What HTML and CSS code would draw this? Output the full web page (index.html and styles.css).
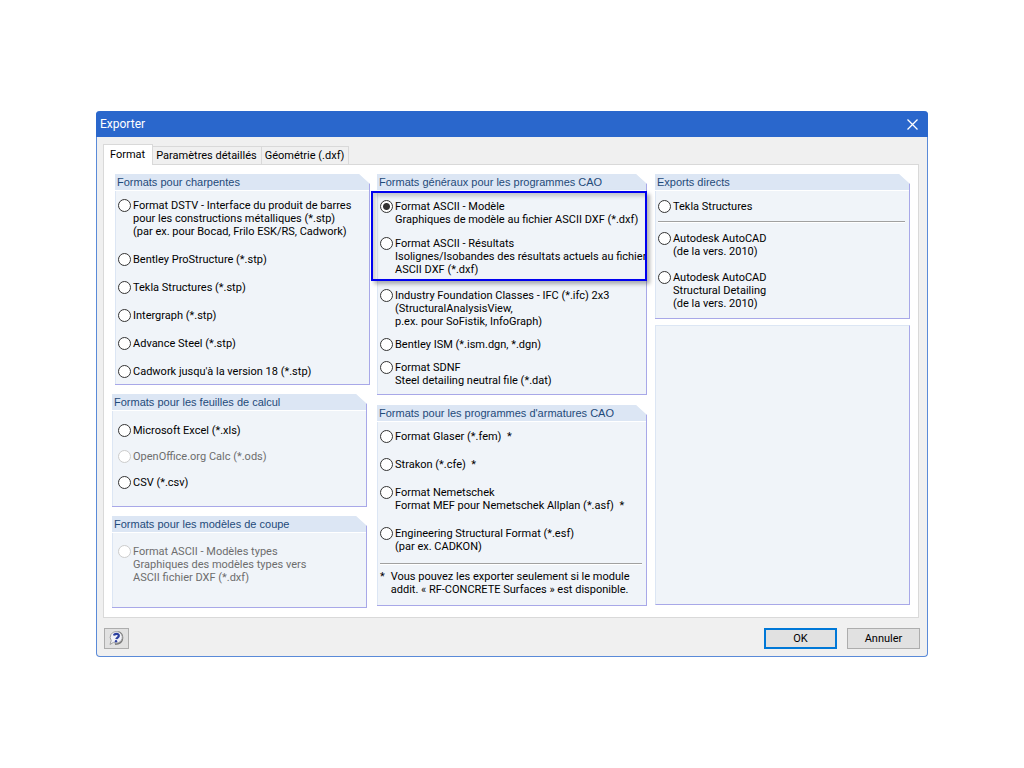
FILE: index.html
```html
<!DOCTYPE html>
<html lang="fr">
<head>
    <meta charset="UTF-8">
    <title>Exporter</title>
    <meta name="viewport" content="width=device-width, initial-scale=1.0">
    <link rel="stylesheet" href="styles.css">
</head>
<body>
    <main class="dialog">
        <header class="titlebar">
            <h1>Exporter</h1>
            <button type="button" class="close" aria-label="Fermer">
                <svg width="11" height="11" viewBox="0 0 11 11"><path d="M.5 .5l10 10M10.5 .5l-10 10" stroke="#fff" stroke-width="1.3"/></svg>
            </button>
        </header>
        <div class="tabs" role="tablist">
            <button type="button" role="tab" class="tab active" aria-selected="true">Format</button>
            <button type="button" role="tab" class="tab">Paramètres détaillés</button>
            <button type="button" role="tab" class="tab">Géométrie (.dxf)</button>
        </div>
        <form class="panel" id="export">
            <div class="column first">
                <section class="group steel">
                    <h2>Formats pour charpentes</h2>
                    <div class="options">
                        <label class="option"><input type="radio" name="format"><span>Format DSTV - Interface du produit de barres<br>pour les constructions métalliques (*.stp)<br>(par ex. pour Bocad, Frilo ESK/RS, Cadwork)</span></label>
                        <label class="option"><input type="radio" name="format"><span>Bentley ProStructure (*.stp)</span></label>
                        <label class="option"><input type="radio" name="format"><span>Tekla Structures (*.stp)</span></label>
                        <label class="option"><input type="radio" name="format"><span>Intergraph (*.stp)</span></label>
                        <label class="option"><input type="radio" name="format"><span>Advance Steel (*.stp)</span></label>
                        <label class="option"><input type="radio" name="format"><span>Cadwork jusqu'à la version 18 (*.stp)</span></label>
                    </div>
                </section>
                <section class="group sheets">
                    <h2>Formats pour les feuilles de calcul</h2>
                    <div class="options">
                        <label class="option"><input type="radio" name="format"><span>Microsoft Excel (*.xls)</span></label>
                        <label class="option disabled"><input type="radio" name="format" disabled><span>OpenOffice.org Calc (*.ods)</span></label>
                        <label class="option"><input type="radio" name="format"><span>CSV (*.csv)</span></label>
                    </div>
                </section>
                <section class="group sections">
                    <h2>Formats pour les modèles de coupe</h2>
                    <div class="options">
                        <label class="option disabled"><input type="radio" name="format" disabled><span>Format ASCII - Modèles types<br>Graphiques des modèles types vers<br>ASCII fichier DXF (*.dxf)</span></label>
                    </div>
                </section>
            </div>
            <div class="column second">
                <section class="group cad">
                    <h2>Formats généraux pour les programmes CAO</h2>
                    <div class="options">
                        <div class="highlight">
                            <label class="option"><input type="radio" name="format" checked><span>Format ASCII - Modèle<br>Graphiques de modèle au fichier ASCII DXF (*.dxf)</span></label>
                            <label class="option"><input type="radio" name="format"><span>Format ASCII - Résultats<br>Isolignes/Isobandes des résultats actuels au fichier<br>ASCII DXF (*.dxf)</span></label>
                        </div>
                        <label class="option"><input type="radio" name="format"><span>Industry Foundation Classes - IFC (*.ifc) 2x3<br>(StructuralAnalysisView,<br>p.ex. pour SoFistik, InfoGraph)</span></label>
                        <label class="option"><input type="radio" name="format"><span>Bentley ISM (*.ism.dgn, *.dgn)</span></label>
                        <label class="option"><input type="radio" name="format"><span>Format SDNF<br>Steel detailing neutral file (*.dat)</span></label>
                    </div>
                </section>
                <section class="group rebar">
                    <h2>Formats pour les programmes d'armatures CAO</h2>
                    <div class="options">
                        <label class="option"><input type="radio" name="format"><span>Format Glaser (*.fem)&nbsp; *</span></label>
                        <label class="option"><input type="radio" name="format"><span>Strakon (*.cfe)&nbsp; *</span></label>
                        <label class="option"><input type="radio" name="format"><span>Format Nemetschek<br>Format MEF pour Nemetschek Allplan (*.asf)&nbsp; *</span></label>
                        <label class="option"><input type="radio" name="format"><span>Engineering Structural Format (*.esf)<br>(par ex. CADKON)</span></label>
                    </div>
                    <hr>
                    <p class="note"><span>*</span><span>Vous pouvez les exporter seulement si le module<br>addit. « RF-CONCRETE Surfaces » est disponible.</span></p>
                </section>
            </div>
            <div class="column third">
                <section class="group direct">
                    <h2>Exports directs</h2>
                    <div class="options">
                        <label class="option"><input type="radio" name="format"><span>Tekla Structures</span></label>
                    </div>
                    <hr>
                    <div class="options">
                        <label class="option"><input type="radio" name="format"><span>Autodesk AutoCAD<br>(de la vers. 2010)</span></label>
                        <label class="option"><input type="radio" name="format"><span>Autodesk AutoCAD<br>Structural Detailing<br>(de la vers. 2010)</span></label>
                    </div>
                </section>
                <div class="blank"></div>
            </div>
        </form>
        <footer class="actions">
            <button type="button" class="help" aria-label="Aide">
                <svg width="17" height="17" viewBox="0 0 17 17">
                    <path d="M10 2a6 6 0 0 1 0 11.500l-3 .5" fill="none" stroke="#777" stroke-width="2"/>
                    <path d="M8.500 1.500a6 5.800 0 1 1-3 10.900L2 14.500l1.200-4A6 5.800 0 0 1 8.500 1.500z" fill="#f1f2f8" stroke="#a0a0a0"/>
                    <path d="M6 5.500C6.300 3.300 11 3.200 10.800 5.800c-.1 1.600-2.300 1.800-2.500 3.400" fill="none" stroke="#2b3f9e" stroke-width="2.200"/>
                    <circle cx="8" cy="11.200" r="1.200" fill="#2b3f9e"/>
                </svg>
            </button>
            <button type="submit" form="export" class="btn primary">OK</button>
            <button type="button" class="btn">Annuler</button>
        </footer>
    </main>
</body>
</html>
```
FILE: styles.css
```css
*{ margin: 0; padding: 0; box-sizing: border-box}
body{
    min-height: 100vh;
    padding: 0 96px;
    display: flex;
    align-items: center;
    background: #fff;
    color: #000;
    font: 11px/13px Roboto, "Liberation Sans", sans-serif;
}
button{
    font: inherit;
    color: inherit;
}
.dialog{
    flex: 1;
    border: 1px solid #5a8ad8;
    border-top: 0;
    border-radius: 4px;
    background: #f0f0f0;
}
.titlebar{
    display: flex;
    align-items: center;
    justify-content: space-between;
    height: 26px;
    margin: 0 -1px;
    padding: 0 10px 0 4px;
    border-radius: 4px 4px 0 0;
    background: #2a67cc;
    color: #fff;
}
.titlebar h1{
    font: 12px/16px Roboto, sans-serif;
}
.close{
    display: flex;
    border: 0;
    background: none;
}
.tabs{
    display: flex;
    align-items: flex-end;
    margin: 7px 7px 0 6px;
}
.tab{
    height: 18px;
    border: 1px solid #d9d9d9;
    border-width: 1px 1px 0 0;
    padding: 0 4px 0 3px;
    background: #f0f0f0;
    white-space: nowrap;
}
.tab.active{
    height: 21px;
    margin-bottom: -1px;
    padding: 0 7px 2px 6px;
    border-left-width: 1px;
    background: #fff;
    position: relative;
}
.panel{
    display: grid;
    grid-template-columns: minmax(0, 258fr) minmax(0, 270fr) minmax(0, 256fr);
    column-gap: 7px;
    margin: 0 8px 0 6px;
    padding: 9px 8px;
    border: 1px solid #d9d9d9;
    background: #fff;
}
.column{
    display: flex;
    flex-direction: column;
}
.first{ gap: 9px}
.second{
    gap: 10px;
    padding-bottom: 2px;
}
.third{
    gap: 6px;
    padding: 0 0 3px 1px;
}

/* the polygon cuts the top right corner only */
.group{
    border: 1px solid #a8a8e8;
    border-width: 0 1px 1px 0;
    background: #f0f4f9;
    box-shadow: inset 1px 0 #dce6f4;
    clip-path: polygon(-20px 0, calc(100% - 11px) 0, 100% 10px, calc(100% + 20px) 10px, calc(100% + 20px) 100%, -20px 100%);
}
.group h2{
    height: 17px;
    padding-left: 2px;
    border-bottom: 1px solid #fff;
    background: #dce6f4;
    color: #1f4a7a;
    font: 11px/16px "Liberation Sans", Arial, sans-serif;
}
.options{
    display: flex;
    flex-direction: column;
    gap: 15px;
    padding: 9px 3px 8px;
}
.option{
    display: flex;
    gap: 2px;
    white-space: nowrap;
}
.option input{
    appearance: none;
    flex: none;
    width: 13px;
    height: 13px;
    border: 1px solid #333;
    border-radius: 50%;
    background: #fff;
}
.option input:checked{
    background: radial-gradient(circle, #333 3px, #fff 4px);
}
.option.disabled{ color: #6d6d6d}
.option.disabled input{ border-color: #ccc}

.steel{ margin-left: 3px}
.sheets,.sections{ margin-right: 3px}
.steel .options{ padding: 8px 3px 6px}
.sheets .options{
    gap: 13px;
    padding: 13px 6px 17px;
}
.sections{ flex: 1}
.sections .options{ padding: 12px 6px 23px}

.cad .options{
    gap: 10px;
    padding-bottom: 7px;
}
.highlight{
    display: flex;
    flex-direction: column;
    gap: 11px;
    margin-bottom: 3px;
    position: relative;
}
.highlight::after{
    content: "";
    position: absolute;
    inset: -9px -4px -5px -9px;
    border: 2px solid #0000f0;
    box-shadow: 3px 3px 4px rgba(0,0,0,.3), inset 3px 3px 4px rgba(0,0,0,.2);
    pointer-events: none;
}
.group hr{
    margin: 0 4px 0 3px;
    border: 0;
    border-top: 1px solid #a0a0a0;
    border-bottom: 1px solid #fff;
}
.rebar{ flex: 1}
.rebar .options{ padding: 8px 3px 10px}
.note{
    display: flex;
    gap: 6px;
    padding: 5px 3px;
    white-space: nowrap;
}
.direct .options{ gap: 13px}
.blank{
    flex: 1;
    border: 1px solid #a8a8e8;
    border-top-color: #dce6f4;
    border-left-color: #dce6f4;
    background: #f0f4f9;
}
.actions{
    display: flex;
    gap: 10px;
    padding: 10px 7px 7px;
}
.help,.btn{
    height: 21px;
    border: 1px solid #adadad;
    background: #e1e1e1;
}
.help{
    display: flex;
    align-items: center;
    justify-content: center;
    width: 25px;
    margin-right: auto;
}
.btn{ width: 73px}
.btn.primary{ border: 2px solid #0078d7}
```
